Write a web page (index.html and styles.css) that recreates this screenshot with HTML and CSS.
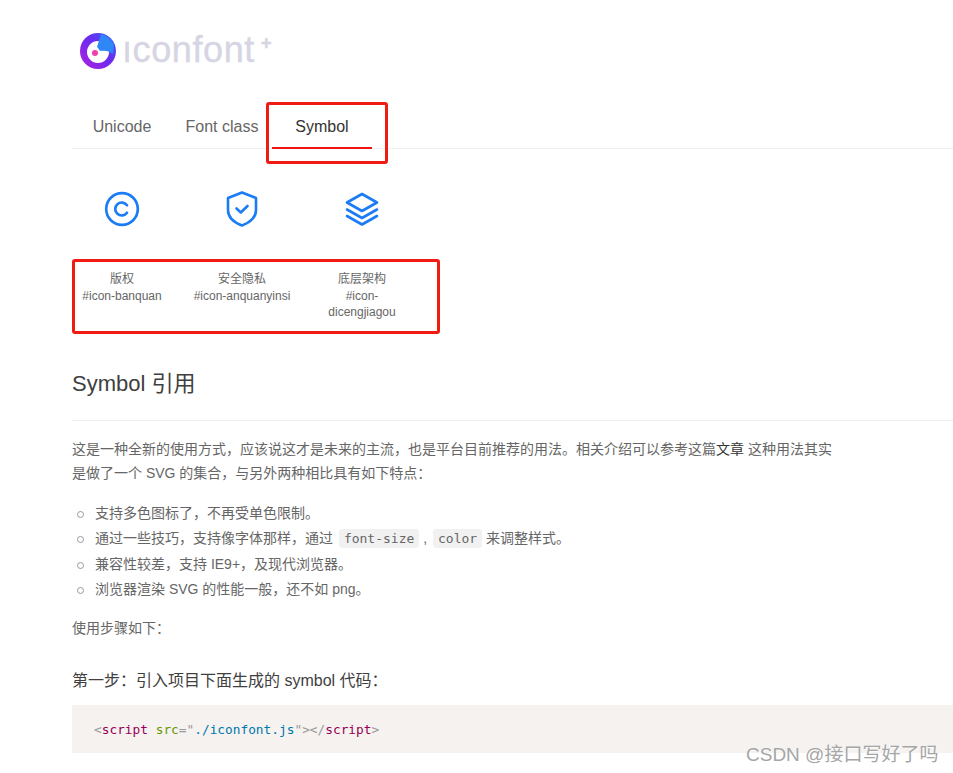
FILE: index.html
```html
<!DOCTYPE html>
<html lang="en">
<head>
    <meta charset="UTF-8">
    <meta name="viewport" content="width=device-width, initial-scale=1.0">
    <title>iconfont Demo</title>
    <link rel="stylesheet" href="styles.css">
</head>
<body>
    <div class="main">
        <div class="logo">
            <svg class="logo-mark" width="36" height="36" viewBox="0 0 36 36">
                <defs>
                    <linearGradient id="ring" x1="0" y1="1" x2="1" y2="0">
                        <stop offset="0" stop-color="#b01fe0"/>
                        <stop offset="0.55" stop-color="#6a2cf0"/>
                        <stop offset="1" stop-color="#3d5ff5"/>
                    </linearGradient>
                </defs>
                <circle cx="18" cy="18" r="18" fill="url(#ring)"/>
                <circle cx="18" cy="19" r="11" fill="#fff"/>
                <path d="M21 1 C26 2 31 6 34 11 L33 21 C29 18 25 17 20 18 C19 16 18 15 17 14 Z" fill="#2f86f7"/>
                <circle cx="15" cy="20" r="3" fill="#ee3fae"/>
            </svg>
            <span class="logo-text">ıconfont</span>
            <span class="logo-plus">+</span>
        </div>

        <ul class="tabs">
            <li>Unicode</li>
            <li>Font class</li>
            <li class="active">Symbol</li>
        </ul>

        <ul class="icon-list">
            <li>
                <svg class="icon" viewBox="0 0 36 36" fill="none" stroke="#1b7cf5" stroke-width="2.7" stroke-linecap="round" stroke-linejoin="round">
                    <circle cx="18" cy="18" r="15.8"/>
                    <path d="M23 14.2 A6.5 6.5 0 1 0 23 21.8"/>
                </svg>
                <div class="name">版权</div>
                <div class="code-name">#icon-banquan</div>
            </li>
            <li>
                <svg class="icon" viewBox="0 0 36 36" fill="none" stroke="#1b7cf5" stroke-width="2.6" stroke-linecap="round" stroke-linejoin="round">
                    <path d="M18 1.5 L32 7 V19 C32 26 26 31.5 18 34.5 C10 31.5 4 26 4 19 V7 Z"/>
                    <path d="M12.5 17.5 L16.8 21.5 L23.5 15"/>
                </svg>
                <div class="name">安全隐私</div>
                <div class="code-name">#icon-anquanyinsi</div>
            </li>
            <li>
                <svg class="icon" viewBox="0 0 36 36" fill="none" stroke="#1b7cf5" stroke-width="2.6" stroke-linecap="round" stroke-linejoin="round">
                    <path d="M18 3 L33 11.5 L18 20 L3 11.5 Z"/>
                    <path d="M3 18.5 L18 27 L33 18.5"/>
                    <path d="M3 25 L18 33.5 L33 25"/>
                </svg>
                <div class="name">底层架构</div>
                <div class="code-name">#icon-dicengjiagou</div>
            </li>
        </ul>

        <h2>Symbol 引用</h2>

        <p class="intro">这是一种全新的使用方式，应该说这才是未来的主流，也是平台目前推荐的用法。相关介绍可以参考这篇<a href="#">文章</a> 这种用法其实是做了一个 SVG 的集合，与另外两种相比具有如下特点：</p>

        <ul class="features">
            <li>支持多色图标了，不再受单色限制。</li>
            <li>通过一些技巧，支持像字体那样，通过 <code>font-size</code> , <code>color</code> 来调整样式。</li>
            <li>兼容性较差，支持 IE9+，及现代浏览器。</li>
            <li>浏览器渲染 SVG 的性能一般，还不如 png。</li>
        </ul>

        <p class="steps">使用步骤如下：</p>

        <h3>第一步：引入项目下面生成的 symbol 代码：</h3>

        <pre class="code-block"><span class="punct">&lt;</span><span class="tag">script</span> <span class="attr">src</span><span class="punct">=</span><span class="val"><span class="punct">"</span>./iconfont.js<span class="punct">"</span></span><span class="punct">&gt;&lt;/</span><span class="tag">script</span><span class="punct">&gt;</span></pre>
    </div>

    <div class="mark mark-tabs"></div>
    <div class="mark mark-names"></div>
    <div class="watermark">CSDN @接口写好了吗</div>
</body>
</html>
```

FILE: styles.css
```css
* {
    margin: 0;
    padding: 0;
    box-sizing: border-box;
}

html, body {
    height: 773px;
    overflow: hidden;
}

body {
    position: relative;
    font-family: "Liberation Sans", "Noto Sans CJK SC", sans-serif;
    font-size: 14px;
    color: #666;
    background: #fff;
}

ul {
    list-style: none;
}

.main {
    padding: 33px 0 0 72px;
}

.logo {
    display: flex;
    align-items: flex-start;
    height: 36px;
    padding-left: 8px;
    color: #d6d5e3;
}

.logo-mark {
    flex: none;
}

.logo-text {
    margin-left: 6px;
    font-family: "Liberation Sans", sans-serif;
    font-size: 36px;
    line-height: 34px;
    letter-spacing: 0.6px;
    -webkit-text-stroke: 0.4px #d6d5e3;
}

.logo-plus {
    margin-left: 6px;
    font-size: 18px;
    font-weight: bold;
    line-height: 20px;
    -webkit-text-stroke: 0.6px #d6d5e3;
}

.tabs {
    display: flex;
    height: 44px;
    margin-top: 36px;
    border-bottom: 1px solid #eee;
}

.tabs li {
    width: 100px;
    height: 44px;
    font-size: 16px;
    line-height: 44px;
    text-align: center;
}

.tabs li.active {
    color: #333;
    border-bottom: 2px solid #f01414;
}

.icon-list {
    display: flex;
    gap: 20px;
    margin-top: 42px;
}

.icon-list li {
    width: 100px;
    text-align: center;
    font-size: 12px;
    line-height: 16px;
}

.icon {
    display: block;
    width: 36px;
    height: 36px;
    margin: 0 auto 44px;
}

.code-name {
    margin-top: 1px;
}

h2 {
    margin-top: 50px;
    padding-bottom: 22px;
    border-bottom: 1px solid #eee;
    font-size: 22px;
    font-weight: normal;
    line-height: 28px;
    color: #404040;
}

.intro {
    width: 764px;
    margin-top: 16px;
    line-height: 24px;
}

.intro a {
    color: #333;
    text-decoration: none;
}

.features {
    margin-top: 16px;
    padding-left: 23px;
}

.features li {
    position: relative;
    height: 25.4px;
    line-height: 25px;
}

.features li::before {
    content: "";
    position: absolute;
    left: -18px;
    top: 10px;
    width: 5px;
    height: 5px;
    border: 1px solid #999;
    border-radius: 50%;
}

code {
    margin-left: 2px;
    padding: 2px 5px;
    border-radius: 3px;
    background: #f1f1f1;
    font-family: "DejaVu Sans Mono", monospace;
    font-size: 13px;
    color: #666;
}

.steps {
    margin-top: 13px;
    line-height: 24px;
}

h3 {
    margin-top: 29px;
    font-size: 16px;
    font-weight: normal;
    line-height: 24px;
    color: #404040;
}

.code-block {
    height: 48px;
    margin-top: 12px;
    padding: 0 22px;
    background: #f5f2f0;
    font-family: "DejaVu Sans Mono", monospace;
    font-size: 12.8px;
    line-height: 50px;
    color: #000;
}

.punct {
    color: #999;
}

.tag {
    color: #905;
}

.attr {
    color: #690;
}

.val {
    color: #07a;
}

/* red boxes drawn over the screenshot */
.mark {
    position: absolute;
    border: 3px solid #f01c14;
    border-radius: 3px;
}

.mark-tabs {
    left: 266px;
    top: 102px;
    width: 122px;
    height: 62px;
}

.mark-names {
    left: 72px;
    top: 259px;
    width: 368px;
    height: 75px;
}

.watermark {
    position: absolute;
    left: 746px;
    top: 743px;
    font-size: 19px;
    line-height: 24px;
    color: #a6a6a6;
    white-space: nowrap;
    text-shadow: 1px 1px 1px rgba(255, 255, 255, 0.8);
}
```
